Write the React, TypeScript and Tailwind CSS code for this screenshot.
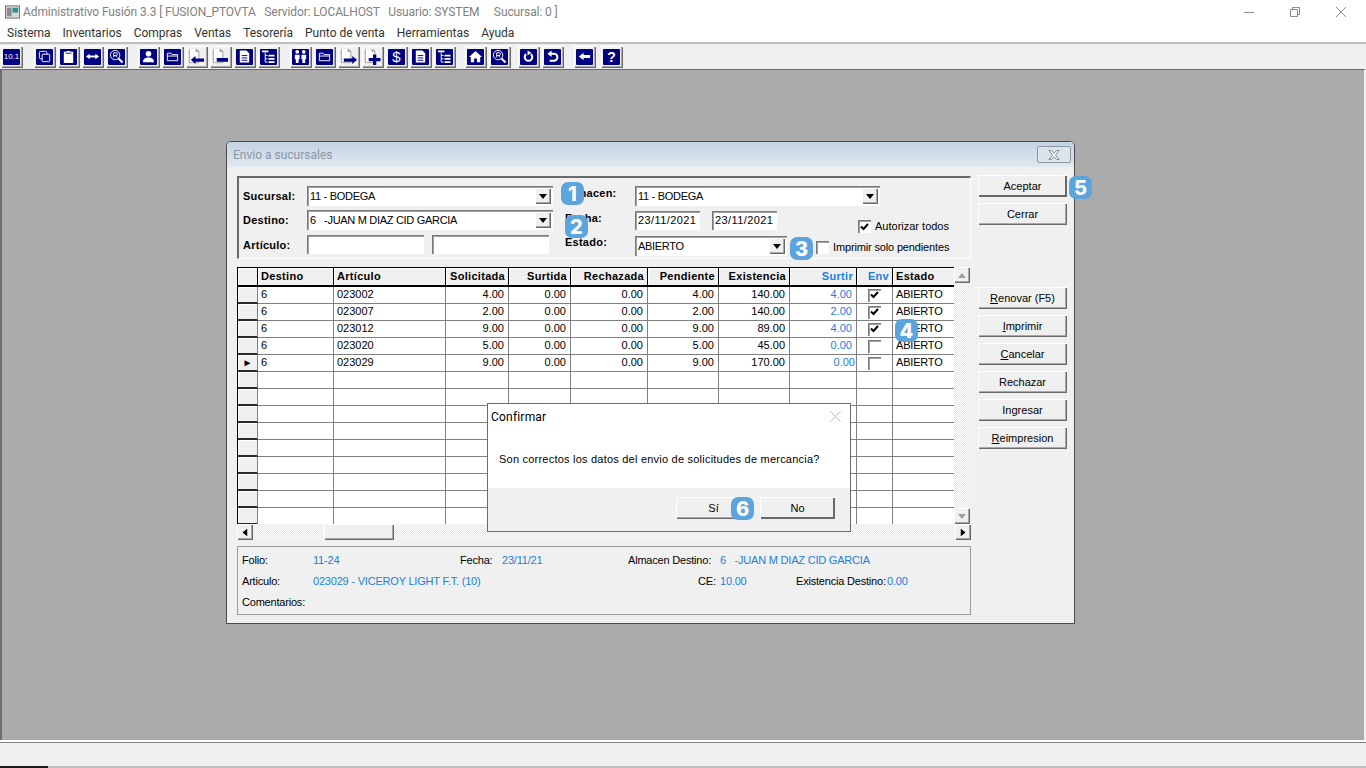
import * as React from 'react';

// Rejillas y datos de la ventana "Envio a sucursales"
const gridCols = 'grid grid-cols-[20px_76px_112px_63px_62px_77px_71px_71px_67px_36px_62px]';
const bevel = 'bg-[#f0f0f0] shadow-[inset_1px_1px_0_#fff,inset_-1px_-1px_0_#696969,inset_-2px_-2px_0_#a8a8a8]';
const sunken = 'bg-white shadow-[inset_1px_1px_0_#7a7a7a,inset_2px_2px_0_#a0a0a0,inset_-1px_-1px_0_#fff]';
const dither = 'bg-[repeating-conic-gradient(#ffffff_0_25%,#e6e6e6_0_50%)] bg-[length:2px_2px]';
const blue = 'text-[#1a7fe0]';

interface Fila {
  destino: string;
  articulo: string;
  solicitada: string;
  surtida: string;
  rechazada: string;
  pendiente: string;
  existencia: string;
  surtir: string;
  env: boolean;
}

const filas: Fila[] = [
  { destino: '6', articulo: '023002', solicitada: '4.00', surtida: '0.00', rechazada: '0.00', pendiente: '4.00', existencia: '140.00', surtir: '4.00', env: true },
  { destino: '6', articulo: '023007', solicitada: '2.00', surtida: '0.00', rechazada: '0.00', pendiente: '2.00', existencia: '140.00', surtir: '2.00', env: true },
  { destino: '6', articulo: '023012', solicitada: '9.00', surtida: '0.00', rechazada: '0.00', pendiente: '9.00', existencia: '89.00', surtir: '4.00', env: true },
  { destino: '6', articulo: '023020', solicitada: '5.00', surtida: '0.00', rechazada: '0.00', pendiente: '5.00', existencia: '45.00', surtir: '0.00', env: false },
  { destino: '6', articulo: '023029', solicitada: '9.00', surtida: '0.00', rechazada: '0.00', pendiente: '9.00', existencia: '170.00', surtir: '0.00', env: false },
];

const W = ({ children }: { children: React.ReactNode }) => (
  <svg viewBox="0 0 16 16" className="w-[15px] h-[15px]" fill="#fff" stroke="none">
    {children}
  </svg>
);

const Copy = () => (
  <W>
    <rect x="2.5" y="2.5" width="8" height="8" rx="1.5" fill="none" stroke="#fff" />
    <rect x="5.5" y="5.5" width="8" height="8" rx="1" fill="#000080" stroke="#fff" />
  </W>
);
const Clip = () => (
  <W>
    <path d="M3 3h3V2h4v1h3v12H3z" />
    <path d="M5 4.5h6" stroke="#000080" />
  </W>
);
const Swap = () => (
  <W>
    <path d="M1 8l4-3v2h6V5l4 3-4 3V9H5v2z" />
  </W>
);
const Lens = () => (
  <W>
    <circle cx="6.5" cy="6.5" r="5" fill="none" stroke="#fff" />
    <path d="M10 10l4.5 4.5" stroke="#fff" strokeWidth="2.2" />
    <path d="M5 9V4h2.5a1.4 1.4 0 010 3H5m2 0l1.5 2" fill="none" stroke="#fff" />
  </W>
);
const Person = () => (
  <W>
    <circle cx="8" cy="5" r="3" />
    <path d="M2 14c0-3 2-5 6-5s6 2 6 5z" />
  </W>
);
const Folder = () => (
  <W>
    <path d="M2.5 12.5v-8h4l1 1.5h6v6.5z" fill="none" stroke="#fff" />
    <path d="M2.5 7.5h11" stroke="#fff" />
  </W>
);
const Doc = () => (
  <W>
    <path d="M3 1.5h7l3 3v10H3z" />
    <path d="M5 7h6M5 9.5h6M5 12h6" stroke="#000080" />
  </W>
);
const Tree = () => (
  <W>
    <path d="M1 1.5h7v2H1z" />
    <path d="M4.5 3.5V14M4.5 7H7M4.5 10.5H7M4.5 14H7" fill="none" stroke="#fff" />
    <path d="M8 6h6.5v2H8zM8 9.5h6.5v2H8zM8 13h6.5v2H8z" />
  </W>
);
const People = () => (
  <W>
    <circle cx="4.5" cy="3" r="2" />
    <circle cx="11.5" cy="3" r="2" />
    <path d="M2 6h5v5H6v4H3v-4H2zM9 6h5v5h-1v4h-3v-4H9z" />
  </W>
);
const Home = () => (
  <W>
    <path d="M8 2l7 6.5h-2V14H9.5v-4h-3v4H3V8.5H1z" />
  </W>
);
const Cw = () => (
  <W>
    <path d="M5.5 5.5a4 4 0 105 0" fill="none" stroke="#fff" strokeWidth="2.2" />
    <path d="M7 1.500l4 2.500-4 3z" />
  </W>
);
const Ccw = () => (
  <W>
    <path d="M6 5h3.500a3.500 3.500 0 010 7.500H5" fill="none" stroke="#fff" strokeWidth="2.2" />
    <path d="M7 1.500v7L2.500 5z" />
  </W>
);
const Left = () => (
  <W>
    <path d="M2 8l5-4v2.500h7v3H7V12z" />
  </W>
);
const Glyph = ({ c, size }: { c: string; size: string }) => <span className={`text-white font-bold leading-none ${size}`}>{c}</span>;

// Documento sobre gris con flecha azul marino
const DocMark = ({ mark }: { mark: 'in' | 'minus' | 'out' | 'plus' }) => (
  <svg viewBox="0 0 18 18" className="w-[17px] h-[17px]">
    <path d="M1.500 0.500h7l3 3v12h-10z" fill="#fff" stroke="#a0a0a0" />
    <path d="M8.500 0.500v3h3" fill="#c8c8c8" stroke="#8e8e8e" />
    {mark === 'in' && <path d="M3 12.500l5-4V11h9v3.500H8V17z" fill="#000080" />}
    {mark === 'minus' && <path d="M5 10.500h12v4H5z" fill="#000080" />}
    {mark === 'out' && <path d="M18 12.500l-5-4V11H4v3.500h9V17z" fill="#000080" />}
    {mark === 'plus' && <path d="M9.500 7h3.500v3.500h4.500v3.500H13v4H9.500v-4H5v-3.500h4.500z" fill="#000080" />}
  </svg>
);

const ToolBtn = ({ children, plain }: { children: React.ReactNode; plain?: boolean }) => (
  <div className={`w-[22px] h-[22px] pt-[3px] pl-[2px] pr-[3px] pb-[3px] ${bevel}`}>
    <div className={`w-full h-full flex items-center justify-center overflow-hidden rounded-[1px] ${plain ? '' : 'bg-[#000080]'}`}>{children}</div>
  </div>
);

const Toolbar = () => (
  <div className="h-[25px] bg-[#f0f0f0] flex items-center pl-[1px]">
    <div className="flex gap-[2px]">
      <ToolBtn><span className="text-white text-[8px] leading-none">10.1</span></ToolBtn>
    </div>
    <div className="flex gap-[2px] ml-[11px]">
      <ToolBtn><Copy /></ToolBtn>
      <ToolBtn><Clip /></ToolBtn>
      <ToolBtn><Swap /></ToolBtn>
      <ToolBtn><Lens /></ToolBtn>
    </div>
    <div className="flex gap-[2px] ml-[10px]">
      <ToolBtn><Person /></ToolBtn>
      <ToolBtn><Folder /></ToolBtn>
      <ToolBtn plain><DocMark mark="in" /></ToolBtn>
      <ToolBtn plain><DocMark mark="minus" /></ToolBtn>
      <ToolBtn><Doc /></ToolBtn>
      <ToolBtn><Tree /></ToolBtn>
    </div>
    <div className="flex gap-[2px] ml-[10px]">
      <ToolBtn><People /></ToolBtn>
      <ToolBtn><Folder /></ToolBtn>
      <ToolBtn plain><DocMark mark="out" /></ToolBtn>
      <ToolBtn plain><DocMark mark="plus" /></ToolBtn>
      <ToolBtn><Glyph c="$" size="text-[15px] font-normal" /></ToolBtn>
      <ToolBtn><Doc /></ToolBtn>
      <ToolBtn><Tree /></ToolBtn>
    </div>
    <div className="flex gap-[2px] ml-[9px]">
      <ToolBtn><Home /></ToolBtn>
      <ToolBtn><Lens /></ToolBtn>
    </div>
    <div className="flex gap-[2px] ml-[7px]">
      <ToolBtn><Cw /></ToolBtn>
      <ToolBtn><Ccw /></ToolBtn>
    </div>
    <div className="flex ml-[10px]">
      <ToolBtn><Left /></ToolBtn>
    </div>
    <div className="flex ml-[5px]">
      <ToolBtn><Glyph c="?" size="text-[14px]" /></ToolBtn>
    </div>
  </div>
);

const Arrow = ({ className = '' }: { className?: string }) => (
  <svg viewBox="0 0 8 5" className={`w-[8px] h-[5px] ${className}`} fill="currentColor">
    <path d="M0 0h8L4 5z" />
  </svg>
);

const Combo = ({ value, width }: { value: string; width: string }) => (
  <div className={`h-[20px] flex items-center justify-between pl-[3px] pr-[2px] whitespace-pre tracking-[-0.3px] ${sunken} ${width}`}>
    <span>{value}</span>
    <span className={`w-[16px] h-[16px] flex items-center justify-center ${bevel}`}>
      <Arrow className="text-black" />
    </span>
  </div>
);

const TextBox = ({ value = '', width }: { value?: string; width: string }) => (
  <div className={`h-[19px] flex items-center pl-[3px] tracking-[0.4px] ${sunken} ${width}`}>{value}</div>
);

const Check = ({ on }: { on: boolean }) => (
  <span className={`w-[13px] h-[13px] shrink-0 flex items-center justify-center ${sunken}`}>
    {on && (
      <svg viewBox="0 0 9 8" className="w-[9px] h-[8px]" fill="none" stroke="#000" strokeWidth="2">
        <path d="M1 3.500l2.500 2.500L8 1" />
      </svg>
    )}
  </span>
);

const ActionBtn = ({ children, heavy }: { children: React.ReactNode; heavy?: boolean }) => (
  <button
    className={`w-[89px] h-[22px] text-[11px] text-black ${heavy ? 'bg-[#f0f0f0] shadow-[inset_1px_1px_0_#fff,inset_-2px_-2px_0_#696969,inset_0_0_0_1px_#777]' : bevel}`}
  >
    {children}
  </button>
);

const FilterPanel = () => (
  <div className="h-[83px] border-t-2 border-l-2 border-t-[#6a6a6a] border-l-[#6a6a6a] border-r border-b border-r-white border-b-white pl-[4px] pt-[8px] flex">
    <div className="w-[322px] flex flex-col">
      <div className="h-[20px] flex items-center">
        <span className="w-[64px] font-bold tracking-[0.25px]">Sucursal:</span>
        <Combo value="11 - BODEGA" width="w-[246px]" />
      </div>
      <div className="h-[20px] mt-[4px] flex items-center">
        <span className="w-[64px] font-bold tracking-[0.25px]">Destino:</span>
        <Combo value="6   -JUAN M DIAZ CID GARCIA" width="w-[246px]" />
      </div>
      <div className="h-[19px] mt-[5px] flex items-center">
        <span className="w-[64px] mt-[2px] font-bold tracking-[0.25px]">Artículo:</span>
        <TextBox width="w-[117px]" />
        <span className="ml-[8px]"><TextBox width="w-[117px]" /></span>
      </div>
    </div>
    <div className="flex flex-col">
      <div className="h-[20px] flex">
        <span className="w-[70px] font-bold tracking-[0.25px] -mt-[3px] leading-[20px]">Almacen:</span>
        <Combo value="11 - BODEGA" width="w-[245px]" />
      </div>
      <div className="h-[20px] mt-[5px] flex">
        <span className="w-[70px] font-bold tracking-[0.25px] -mt-[3px] leading-[20px]">Fecha:</span>
        <TextBox value="23/11/2021" width="w-[65px]" />
        <span className="ml-[12px]"><TextBox value="23/11/2021" width="w-[65px]" /></span>
        <label className="ml-[81px] mt-[9px] h-[13px] flex items-center gap-[4px] whitespace-nowrap"><Check on />Autorizar todos</label>
      </div>
      <div className="h-[20px] mt-[5px] flex">
        <span className="w-[70px] font-bold tracking-[0.25px] -mt-[4px] leading-[20px]">Estado:</span>
        <Combo value="ABIERTO" width="w-[152px]" />
        <label className="ml-[29px] mt-[5px] h-[13px] flex items-center gap-[4px] whitespace-nowrap tracking-[-0.15px]"><Check on={false} />Imprimir solo pendientes</label>
      </div>
    </div>
  </div>
);

const headCell = 'h-[19px] leading-[17px] font-bold tracking-[0.3px] border-r border-r-black border-b-2 border-b-black shadow-[inset_1px_1px_0_#fff] px-[3px] bg-[#f0f0f0]';
const cell = 'h-[17px] leading-[15px] px-[3px] border-r border-b border-[#808080] bg-white whitespace-nowrap';
const num = 'text-right pr-[4px]';

const DataGrid = () => (
  <div className="h-[273px] flex flex-col">
    <div className="flex h-[257px]">
      <div className="w-[717px] overflow-hidden border-t border-l border-black">
        <div className={gridCols}>
          <div className={headCell} />
          <div className={headCell}>Destino</div>
          <div className={headCell}>Artículo</div>
          <div className={`${headCell} text-right`}>Solicitada</div>
          <div className={`${headCell} text-right`}>Surtida</div>
          <div className={`${headCell} text-right`}>Rechazada</div>
          <div className={`${headCell} text-right`}>Pendiente</div>
          <div className={`${headCell} text-right`}>Existencia</div>
          <div className={`${headCell} text-right ${blue}`}>Surtir</div>
          <div className={`${headCell} text-right ${blue}`}>Env</div>
          <div className={headCell}>Estado</div>
        </div>
        {filas.map((f, i) => (
          <div key={f.articulo} className={gridCols}>
            <div className="h-[17px] bg-[#f0f0f0] border-r border-r-[#808080] border-b-2 border-b-[#2a2a2a] shadow-[inset_1px_1px_0_#fff] flex items-center justify-center">
              {i === 4 && <span className="text-[10px] leading-none text-black">►</span>}
            </div>
            <div className={cell}>{f.destino}</div>
            <div className={cell}>{f.articulo}</div>
            <div className={`${cell} ${num}`}>{f.solicitada}</div>
            <div className={`${cell} ${num}`}>{f.surtida}</div>
            <div className={`${cell} ${num}`}>{f.rechazada}</div>
            <div className={`${cell} ${num}`}>{f.pendiente}</div>
            <div className={`${cell} ${num}`}>{f.existencia}</div>
            <div className={`${cell} text-right ${blue} ${i === 4 ? 'pr-[1px]' : 'pr-[4px]'}`}>{f.surtir}</div>
            <div className={`${cell} flex items-center justify-center`}><Check on={f.env} /></div>
            <div className={`${cell} tracking-[-0.2px]`}>ABIERTO</div>
          </div>
        ))}
        {Array.from({ length: 9 }).map((_, i) => (
          <div key={i} className={gridCols}>
            <div className="h-[17px] bg-[#f0f0f0] border-r border-r-[#808080] border-b-2 border-b-[#2a2a2a] shadow-[inset_1px_1px_0_#fff]" />
            {Array.from({ length: 10 }).map((_, j) => (
              <div key={j} className={cell} />
            ))}
          </div>
        ))}
      </div>
      <div className={`w-[16px] flex flex-col justify-between ${dither}`}>
        <span className={`h-[16px] flex items-center justify-center ${bevel}`}><Arrow className="rotate-180 text-[#a0a0a0]" /></span>
        <span className={`h-[16px] flex items-center justify-center ${bevel}`}><Arrow className="text-[#a0a0a0]" /></span>
      </div>
    </div>
    <div className={`h-[16px] flex ${dither}`}>
      <span className={`w-[16px] flex items-center justify-center ${bevel}`}><Arrow className="rotate-90 text-black" /></span>
      <span className={`w-[70px] ml-[71px] ${bevel}`} />
      <span className={`w-[16px] ml-auto flex items-center justify-center ${bevel}`}><Arrow className="-rotate-90 text-black" /></span>
    </div>
  </div>
);

const InfoPanel = () => (
  <div className="h-[69px] mt-[6px] border border-[#9a9a9a] pl-[4px] pt-[7px] flex flex-col gap-[8px] whitespace-pre leading-[13px] tracking-[-0.2px]">
    <div className="flex">
      <span className="w-[71px]">Folio:</span>
      <span className={`w-[147px] ${blue}`}>11-24</span>
      <span className="w-[42px]">Fecha:</span>
      <span className={`w-[126px] ${blue}`}>23/11/21</span>
      <span className="w-[92px]">Almacen Destino:</span>
      <span className={blue}>6   -JUAN M DIAZ CID GARCIA</span>
    </div>
    <div className="flex">
      <span className="w-[71px]">Articulo:</span>
      <span className={`w-[385px] ${blue}`}>023029 - VICEROY LIGHT F.T. (10)</span>
      <span className="w-[22px]">CE:</span>
      <span className={`w-[76px] ${blue}`}>10.00</span>
      <span className="w-[91px]">Existencia Destino:</span>
      <span className={blue}>0.00</span>
    </div>
    <div>Comentarios:</div>
  </div>
);

const SubmitWindow = () => (
  <div className="absolute left-[226px] top-[71px] w-[849px] h-[483px] border border-[#4a4a4a] rounded-t-[5px] bg-[#f0f0f0] overflow-hidden">
    <div className="h-[25px] bg-gradient-to-b from-[#c3d3e3] to-[#e0e8f0] flex items-center justify-between pl-[6px] pr-[2px]">
      <span className="mt-px text-[12px] text-[#8a96a2] font-['Roboto',sans-serif]">Envio a sucursales</span>
      <span className="w-[34px] h-[17px] mr-[1px] border border-[#8c97a3] rounded-[2px] flex items-center justify-center bg-[#dbe4ec]">
        <svg viewBox="0 0 12 10" className="w-[12px] h-[10px]" fill="#fff" stroke="#66707a" strokeWidth="0.8">
          <path d="M1 0.500h2.500L6 3.300 8.500 0.500H11L7.500 5 11 9.500H8.500L6 6.700 3.500 9.500H1L4.500 5z" />
        </svg>
      </span>
    </div>
    <div className="flex pl-[10px] pt-[9px]">
      <div className="w-[734px]">
        <FilterPanel />
        <div className="mt-[8px]">
          <DataGrid />
        </div>
        <InfoPanel />
      </div>
      <div className="ml-[7px] -mt-px flex flex-col">
        <ActionBtn heavy>Aceptar</ActionBtn>
        <div className="mt-[6px]"><ActionBtn>Cerrar</ActionBtn></div>
        <div className="mt-[62px] flex flex-col gap-[6px]">
          <ActionBtn><u>R</u>enovar (F5)</ActionBtn>
          <ActionBtn><u>I</u>mprimir</ActionBtn>
          <ActionBtn><u>C</u>ancelar</ActionBtn>
          <ActionBtn>Rechazar</ActionBtn>
          <ActionBtn>Ingresar</ActionBtn>
          <ActionBtn><u>R</u>eimpresion</ActionBtn>
        </div>
      </div>
    </div>
  </div>
);

const ConfirmDialog = () => (
  <div className="absolute left-[487px] top-[333px] w-[364px] h-[129px] border border-[#6a6a6a] bg-white flex flex-col">
    <div className="h-[84px] px-[3px]">
      <div className="h-[25px] flex items-center justify-between pr-[6px]">
        <span className="text-[12px] text-black font-['Roboto',sans-serif] tracking-[0.2px]">Confirmar</span>
        <svg viewBox="0 0 11 11" className="w-[11px] h-[11px]" stroke="#b8b8b8" fill="none">
          <path d="M0.500 0.500l10 10M10.500 0.500l-10 10" />
        </svg>
      </div>
      <p className="ml-[8px] mt-[23px] text-[11px] tracking-[0.22px] text-black leading-[14px]">Son correctos los datos del envio de solicitudes de mercancia?</p>
    </div>
    <div className="flex-1 bg-[#f0f0f0] flex items-start justify-end pt-[9px] pr-[15px] gap-[9px]">
      <button className={`w-[75px] h-[22px] text-[11px] ${bevel}`}>Sí</button>
      <button className="w-[75px] h-[22px] text-[11px] bg-[#f0f0f0] shadow-[inset_1px_1px_0_#fff,inset_-2px_-2px_0_#696969,inset_0_0_0_1px_#777]">No</button>
    </div>
  </div>
);

const Badge = ({ n, pos }: { n: string; pos: string }) => (
  <div className={`absolute w-[23px] h-[23px] rounded-[7px] bg-[#5ba4dd] text-white flex items-center justify-center text-[20px] font-extrabold font-['Inter',sans-serif] leading-none ${pos}`}>
    {n}
  </div>
);

export default function App() {
  return (
    <div className="w-[1366px] h-[768px] overflow-hidden flex flex-col bg-white text-[11px] text-black font-['Liberation_Sans',sans-serif]">
      <div className="h-[24px] flex items-center justify-between text-[12px] text-[#7f7f7f] font-['Roboto',sans-serif] shrink-0">
        <div className="flex items-center whitespace-pre pl-[5px]">
          <svg viewBox="0 0 16 14" className="w-[15px] h-[14px] mr-[3px]">
            <rect x="0.500" y="0.500" width="15" height="13" fill="#d8d8d8" stroke="#6f6f6f" />
            <rect x="2" y="2.500" width="5" height="9" fill="#8c8c8c" />
            <rect x="8" y="2.500" width="6" height="5" fill="#2f8f8f" />
          </svg>
          <span className="tracking-[-0.1px]">Administrativo Fusión 3.3 [ FUSION_PTOVTA   Servidor: LOCALHOST   Usuario: SYSTEM     Sucursal: 0 ]</span>
        </div>
        <div className="flex pr-[2px]">
          <span className="w-[46px] h-[20px] flex items-center justify-center">
            <svg viewBox="0 0 10 10" className="w-[10px] h-[10px]" stroke="#8a8a8a" fill="none"><path d="M0 5.500h10" /></svg>
          </span>
          <span className="w-[46px] h-[20px] flex items-center justify-center">
            <svg viewBox="0 0 10 10" className="w-[10px] h-[10px]" stroke="#8a8a8a" fill="none"><path d="M0.500 2.500h7v7h-7zM2.500 2.500v-2h7v7h-2" /></svg>
          </span>
          <span className="w-[46px] h-[20px] flex items-center justify-center">
            <svg viewBox="0 0 10 10" className="w-[10px] h-[10px]" stroke="#8a8a8a" fill="none"><path d="M0 0l10 10M10 0L0 10" /></svg>
          </span>
        </div>
      </div>
      <div className="h-[20px] shrink-0 flex items-center gap-[12px] pl-[7px] text-[12px] text-[#333] font-['Roboto',sans-serif] border-b-2 border-b-[#bdbdbd]">
        {['Sistema', 'Inventarios', 'Compras', 'Ventas', 'Tesorería', 'Punto de venta', 'Herramientas', 'Ayuda'].map((m) => (
          <span key={m}>{m}</span>
        ))}
      </div>
      <Toolbar />
      <div className="relative flex-1 bg-[#ababab] border-t border-l-2 border-t-[#696969] border-l-[#6e6e6e] border-r-2 border-r-[#f0f0f0]">
        <div className="absolute -left-[2px] top-0 w-[1366px] h-0">
          <SubmitWindow />
          <ConfirmDialog />
          <Badge n="1" pos="left-[561px] top-[112px]" />
          <Badge n="2" pos="left-[565px] top-[145px]" />
          <Badge n="3" pos="left-[790px] top-[167px]" />
          <Badge n="4" pos="left-[895px] top-[249px]" />
          <Badge n="5" pos="left-[1069px] top-[106px]" />
          <Badge n="6" pos="left-[731px] top-[427px]" />
        </div>
      </div>
      <div className="h-[28px] shrink-0 bg-[#f0f0f0] border-t-2 border-t-white flex flex-col">
        <div className="h-px bg-[#808080]" />
        <div className="flex-1" />
        <div className="h-[2px] flex">
          <div className="w-[48px] bg-[#1c1c1c]" />
          <div className="flex-1 bg-[#c0c0c0]" />
        </div>
      </div>
    </div>
  );
}
